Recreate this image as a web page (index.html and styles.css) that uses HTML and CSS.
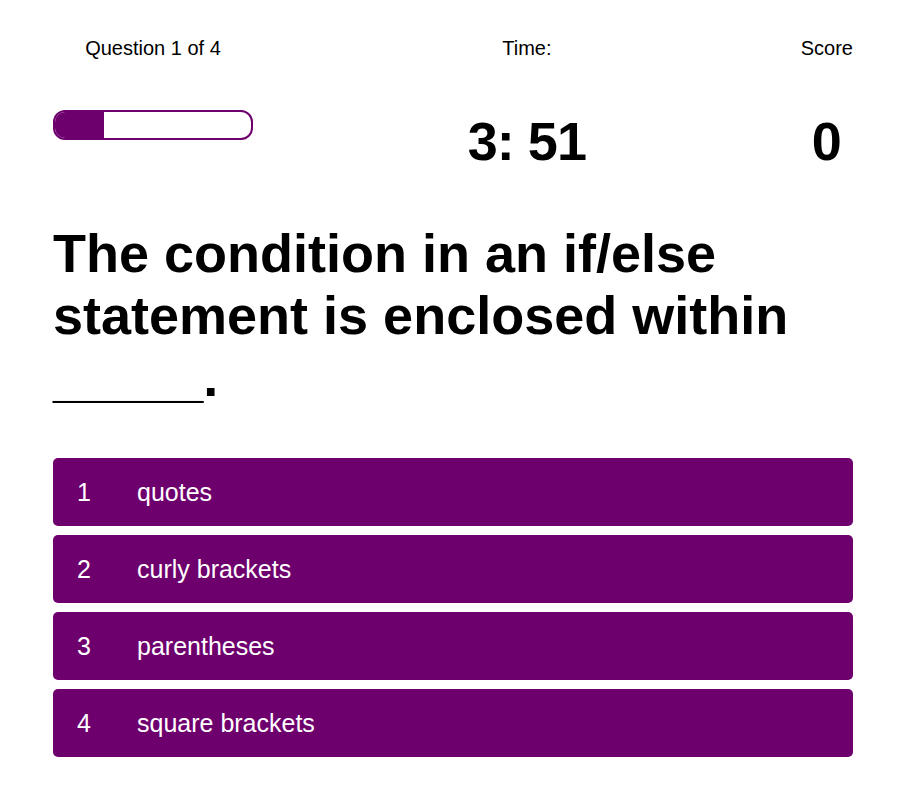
FILE: index.html
```html
<!DOCTYPE html>
<html lang="en">
<head>
<meta charset="utf-8">
<title>Quiz</title>
<link rel="stylesheet" href="styles.css">
</head>
<body>
<main class="quiz">
  <header class="stats">
    <div class="stat stat-progress">
      <div class="stat-label">Question 1 of 4</div>
      <div class="progress"><div class="progress-fill" style="width:25%"></div></div>
    </div>
    <div class="stat">
      <div class="stat-label">Time:</div>
      <div class="stat-value stat-time">3: 51</div>
    </div>
    <div class="stat">
      <div class="stat-label">Score</div>
      <div class="stat-value">0</div>
    </div>
  </header>
  <h1 class="question">The condition in an if/else statement is enclosed within _____.</h1>
  <ol class="answers">
    <li><button class="answer"><span class="answer-num">1</span><span class="answer-text">quotes</span></button></li>
    <li><button class="answer"><span class="answer-num">2</span><span class="answer-text">curly brackets</span></button></li>
    <li><button class="answer"><span class="answer-num">3</span><span class="answer-text">parentheses</span></button></li>
    <li><button class="answer"><span class="answer-num">4</span><span class="answer-text">square brackets</span></button></li>
  </ol>
</main>
</body>
</html>
```
FILE: styles.css
```css
html, body {
  margin: 0;
  padding: 0;
  background: #fff;
}
body {
  font-family: "Liberation Sans", Arial, sans-serif;
  color: #000;
  padding-right: 1px;
}
.quiz {
  width: 800px;
  margin: 0 auto;
  padding-top: 37px;
}
.stats {
  display: flex;
  justify-content: space-between;
  align-items: flex-start;
}
.stat {
  display: flex;
  flex-direction: column;
  align-items: center;
  gap: 50px;
}
.stat-progress {
  width: 200px;
}
.stat-label {
  font-size: 20px;
  line-height: 23px;
}
.stat-value {
  font-size: 54px;
  font-weight: bold;
  line-height: 62px;
}
.stat-time {
  letter-spacing: -1px;
}
.progress {
  box-sizing: border-box;
  width: 200px;
  height: 30px;
  border: 2px solid #6e006e;
  border-radius: 12px;
  overflow: hidden;
  align-self: stretch;
}
.progress-fill {
  height: 100%;
  background: #6e006e;
}
.question {
  font-size: 54px;
  line-height: 62px;
  font-weight: bold;
  margin: 50px 0 50px;
}
.answers {
  list-style: none;
  margin: 0;
  padding: 0;
  display: flex;
  flex-direction: column;
  gap: 9px;
}
.answer {
  display: flex;
  align-items: center;
  width: 100%;
  height: 68px;
  padding: 0 24px;
  border: none;
  border-radius: 5px;
  background: #6e006e;
  color: #fff;
  font-family: "Liberation Sans", Arial, sans-serif;
  font-size: 25px;
  text-align: left;
  cursor: pointer;
}
.answer-num {
  width: 60px;
  flex: none;
}
```
